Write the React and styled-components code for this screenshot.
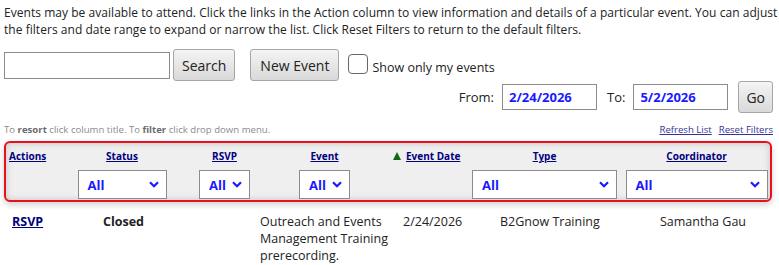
import styled, { createGlobalStyle } from "styled-components";

const GlobalStyle = createGlobalStyle`
  html, body {
    margin: 0;
    padding: 0;
    background: #ffffff;
  }
  body {
    font-family: "Open Sans", "Liberation Sans", sans-serif;
    color: #222222;
  }
`;

const Page = styled.div`
  width: 779px;
  padding: 4px 6px 0 4px;
  box-sizing: border-box;
`;

const Intro = styled.p`
  margin: 0;
  font-size: 12px;
  line-height: 17px;
  letter-spacing: 0.04px;
  width: 776px;
`;

const Toolbar = styled.div`
  display: flex;
  align-items: center;
  margin-top: 11px;
  height: 32px;
`;

const SearchInput = styled.input`
  width: 166px;
  height: 27px;
  box-sizing: border-box;
  border: 1px solid #8c8c8c;
  margin: 0 3px 0 0;
  padding: 2px 4px;
  font-family: inherit;
`;

const Button = styled.button`
  height: 32px;
  box-sizing: border-box;
  padding: 0 ${(p) => p.$pad || 8}px;
  margin-right: ${(p) => p.$gap || 0}px;
  border: 1px solid #a6a6a6;
  border-radius: 3px;
  background: linear-gradient(#f4f4f4, #d9d9d9);
  font-family: "Open Sans", "Liberation Sans", sans-serif;
  font-size: 14px;
  color: #222222;
  cursor: pointer;
`;

const CheckLabel = styled.label`
  display: flex;
  align-items: center;
  gap: 4px;
  font-size: 12.5px;
  margin-top: 5px;
`;

const CheckBox = styled.span`
  width: 18px;
  height: 18px;
  border: 1px solid #666;
  border-radius: 4px;
  background: #fff;
  margin-top: -7px;
`;

const DateRow = styled.div`
  display: flex;
  justify-content: flex-end;
  align-items: center;
  height: 32px;
  gap: 8px;
`;

const DateLabel = styled.span`
  font-size: 13px;
`;

const DateInput = styled.div`
  width: 95px;
  height: 26px;
  box-sizing: border-box;
  border: 1px solid #8c8c8c;
  padding-left: 6px;
  display: flex;
  align-items: center;
  font-size: 13px;
  font-weight: bold;
  color: #1a1aff;
  margin-right: 2px;
`;

const HintRow = styled.div`
  display: flex;
  justify-content: space-between;
  align-items: flex-end;
  margin-top: 9px;
  height: 14px;
  font-size: 9.6px;
`;

const Hint = styled.span`
  color: #8c8c8c;
  b {
    color: #6a6a6a;
  }
`;

const Links = styled.span`
  display: flex;
  gap: 7px;
`;

const SmallLink = styled.a`
  color: #333399;
  text-decoration: underline;
  cursor: pointer;
`;

const FilterBox = styled.div`
  margin-top: 5px;
  width: 768px;
  box-sizing: border-box;
  border: 2px solid #e8101c;
  border-radius: 6px;
  background: #efefef;
  box-shadow: inset 0 0 7px rgba(0, 0, 0, 0.18), 0 3px 6px rgba(0, 0, 0, 0.18);
  display: grid;
  grid-template-columns: 66px 100px 105px 95px 94px 157px 147px;
  grid-template-rows: 24px 30px;
  padding: 3px 0 0;
  align-items: start;
`;

const HeadCell = styled.div`
  display: flex;
  justify-content: ${(p) => (p.$left ? "flex-start" : "center")};
  padding-left: ${(p) => p.$indent || 0}px;
  align-items: center;
  gap: 5px;
  font-size: 10px;
  font-weight: bold;
  padding-top: 3px;
`;

const HeadLink = styled.a`
  color: #000080;
  text-decoration: underline;
  cursor: pointer;
`;

const Arrow = styled.span`
  width: 0;
  height: 0;
  border-left: 4px solid transparent;
  border-right: 4px solid transparent;
  border-bottom: 8px solid #0d6b0d;
`;

const SelectCell = styled.div`
  display: flex;
  justify-content: center;
`;

const Select = styled.div`
  width: ${(p) => p.$w}px;
  height: 29px;
  box-sizing: border-box;
  border: 1px solid #8c8c8c;
  background: #fff;
  display: flex;
  align-items: center;
  justify-content: space-between;
  padding: 0 7px 0 9px;
  font-size: 13px;
  font-weight: bold;
  color: #1a1aff;
`;

const DataRow = styled.div`
  display: grid;
  grid-template-columns: 91px 157px 143px 97px 160px 1fr;
  margin-top: 11px;
  padding-left: 8px;
  font-size: 12.5px;
  line-height: 17px;
`;

const DataLink = styled.a`
  color: #000080;
  font-weight: bold;
  text-decoration: underline;
`;

const Bold = styled.span`
  font-weight: bold;
`;

const Chevron = () => (
  <svg width="10" height="7" viewBox="0 0 10 7">
    <path d="M1 1.2 L5 5.2 L9 1.2" fill="none" stroke="#1a1aff" strokeWidth="2.2" />
  </svg>
);

const FilterSelect = ({ w }) => (
  <SelectCell>
    <Select $w={w}>
      <span>All</span>
      <Chevron />
    </Select>
  </SelectCell>
);

export default function App() {
  return (
    <>
      <GlobalStyle />
      <Page>
        <Intro>
          Events may be available to attend. Click the links in the Action column to view information and details of a particular event. You can adjust the filters and date range to expand or narrow the list. Click Reset Filters to return to the default filters.
        </Intro>
        <Toolbar>
          <SearchInput />
          <Button $pad={8} $gap={15}>Search</Button>
          <Button $pad={9} $gap={9}>New Event</Button>
          <CheckLabel>
            <CheckBox />
            Show only my events
          </CheckLabel>
        </Toolbar>
        <DateRow>
          <DateLabel>From:</DateLabel>
          <DateInput>2/24/2026</DateInput>
          <DateLabel>To:</DateLabel>
          <DateInput>5/2/2026</DateInput>
          <Button $pad={7}>Go</Button>
        </DateRow>
        <HintRow>
          <Hint>
            To <b>resort</b> click column title. To <b>filter</b> click drop down menu.
          </Hint>
          <Links>
            <SmallLink>Refresh List</SmallLink>
            <SmallLink>Reset Filters</SmallLink>
          </Links>
        </HintRow>
        <FilterBox>
          <HeadCell $left $indent={3}><HeadLink>Actions</HeadLink></HeadCell>
          <HeadCell><HeadLink>Status</HeadLink></HeadCell>
          <HeadCell><HeadLink>RSVP</HeadLink></HeadCell>
          <HeadCell><HeadLink>Event</HeadLink></HeadCell>
          <HeadCell $left $indent={21}><Arrow /><HeadLink>Event Date</HeadLink></HeadCell>
          <HeadCell><HeadLink>Type</HeadLink></HeadCell>
          <HeadCell><HeadLink>Coordinator</HeadLink></HeadCell>
          <div />
          <FilterSelect w={89} />
          <FilterSelect w={51} />
          <FilterSelect w={51} />
          <div />
          <FilterSelect w={145} />
          <FilterSelect w={142} />
        </FilterBox>
        <DataRow>
          <div><DataLink>RSVP</DataLink></div>
          <div><Bold>Closed</Bold></div>
          <div>Outreach and Events<br />Management Training<br />prerecording.</div>
          <div>2/24/2026</div>
          <div>B2Gnow Training</div>
          <div>Samantha Gau</div>
        </DataRow>
      </Page>
    </>
  );
}
